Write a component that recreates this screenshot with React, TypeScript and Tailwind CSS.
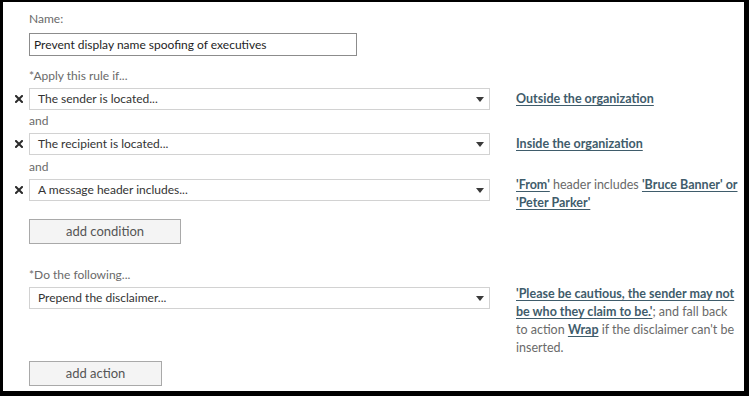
import React from 'react';

const font = { fontFamily: 'Lato, "Open Sans", "Liberation Sans", sans-serif' };

const RemoveIcon: React.FC = () => (
  <svg width="8" height="8" viewBox="0 0 8 8" className="block">
    <path d="M1 1 L7 7 M7 1 L1 7" stroke="#2b2b2b" strokeWidth="2" strokeLinecap="square" />
  </svg>
);

const Caret: React.FC = () => (
  <svg width="8" height="5" viewBox="0 0 8 5" className="block">
    <path d="M0 0 H8 L4 5 Z" fill="#3a3a3a" />
  </svg>
);

const Select: React.FC<{ value: string }> = ({ value }) => (
  <div className="w-[461px] h-[22px] shrink-0 border border-[#d2d2d2] bg-white flex items-center pl-[8px] pr-[5px]">
    <span className="flex-1 text-[12px] text-[#333]">{value}</span>
    <Caret />
  </div>
);

const Link: React.FC<{ children: React.ReactNode }> = ({ children }) => (
  <span className="font-bold text-[#3f5c6b] underline underline-offset-2 decoration-1">{children}</span>
);

const Label: React.FC<{ children: React.ReactNode; className?: string }> = ({ children, className }) => (
  <div className={'pl-[26px] h-[16px] leading-[16px] text-[12px] text-[#6a6a6a] ' + (className ?? '')}>{children}</div>
);

const ConditionRow: React.FC<{ value: string; children: React.ReactNode; removable?: boolean; textClass?: string }> = ({
  value,
  children,
  removable = true,
  textClass,
}) => (
  <div className="flex items-start h-[22px]">
    <div className="w-[26px] h-[22px] flex items-center pl-[12px]">{removable && <RemoveIcon />}</div>
    <Select value={value} />
    <div className={'ml-[26px] w-[226px] whitespace-nowrap text-[12.5px] leading-[18px] text-[#6a6a6a] ' + (textClass ?? '')}>
      {children}
    </div>
  </div>
);

const Button: React.FC<{ label: string; className: string }> = ({ label, className }) => (
  <div className="pl-[26px]">
    <button
      className={
        'h-[25px] bg-[#f4f4f4] border border-[#a9a9a9] text-[13px] text-[#555] flex items-center justify-center ' + className
      }
    >
      {label}
    </button>
  </div>
);

export default function App() {
  return (
    <div
      style={font}
      className="w-[749px] h-[396px] bg-white border-l-[3px] border-t-2 border-r-[5px] border-b-[5px] border-black overflow-hidden"
    >
      <div className="pt-[9px] flex flex-col">
        <Label>Name:</Label>
        <div className="pl-[26px] mt-[6px]">
          <div className="w-[328px] h-[23px] border border-[#8c8c8c] flex items-center pl-[4px] text-[12px] text-[#1e1e1e]">
            Prevent display name spoofing of executives
          </div>
        </div>

        <Label className="mt-[12px]">*Apply this rule if...</Label>
        <div className="mt-[4px]">
          <ConditionRow value="The sender is located..." textClass="mt-[2px]">
            <Link>Outside the organization</Link>
          </ConditionRow>
        </div>
        <Label className="mt-[3px]">and</Label>
        <div className="mt-[4px]">
          <ConditionRow value="The recipient is located..." textClass="mt-[2px]">
            <Link>Inside the organization</Link>
          </ConditionRow>
        </div>
        <Label className="mt-[4px]">and</Label>
        <div className="mt-[4px]">
          <ConditionRow value="A message header includes..." textClass="-mt-[3px]">
            <Link>'From'</Link> header includes <Link>'Bruce Banner' or</Link>
            <br />
            <Link>'Peter Parker'</Link>
          </ConditionRow>
        </div>
        <div className="mt-[18px]">
          <Button label="add condition" className="w-[152px]" />
        </div>

        <Label className="mt-[23px]">*Do the following...</Label>
        <div className="mt-[4px]">
          <ConditionRow value="Prepend the disclaimer..." removable={false} textClass="-mt-[2px] leading-[17.5px]">
            <Link>'Please be cautious, the sender may not</Link>
            <br />
            <Link>be who they claim to be.'</Link>; and fall back
            <br />
            to action <Link>Wrap</Link> if the disclaimer can't be
            <br />
            inserted.
          </ConditionRow>
        </div>
        <div className="mt-[52px]">
          <Button label="add action" className="w-[133px]" />
        </div>
      </div>
    </div>
  );
}
